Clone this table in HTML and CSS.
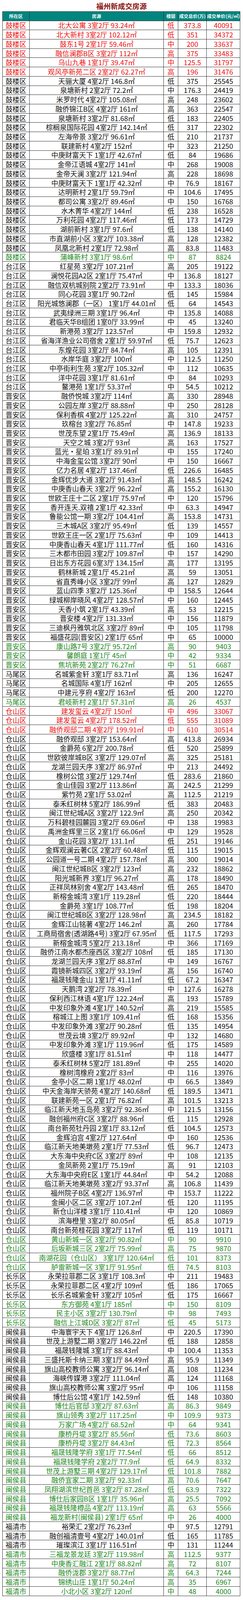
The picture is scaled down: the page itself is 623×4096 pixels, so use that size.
FILE: index.html
```html
<!DOCTYPE html>
<html lang="zh-CN">
<head>
<meta charset="utf-8">
<title>福州新成交房源</title>
<link rel="stylesheet" href="styles.css">
</head>
<body>
<h1 class="title">福州新成交房源</h1>
<div class="table">
<div class="row head"><span>所在区</span><span>房源</span><span>楼层</span><span>成交总价(万)</span><span>成交单价(元/㎡)</span></div>
<div class="row r"><span>鼓楼区</span><span>北大公寓 3室2厅 93.24㎡</span><span>低</span><span>373.8</span><span>40091</span></div>
<div class="row r"><span>鼓楼区</span><span>北大新村 3室2厅 102.12㎡</span><span>低</span><span>351</span><span>34372</span></div>
<div class="row r"><span>鼓楼区</span><span>鼓东1号 2室1厅 59.46㎡</span><span>中</span><span>200</span><span>33637</span></div>
<div class="row r"><span>鼓楼区</span><span>融信澜郡B区 3室2厅 112㎡</span><span>高</span><span>375</span><span>33483</span></div>
<div class="row r"><span>鼓楼区</span><span>乌山九巷 1室1厅 39.47㎡</span><span>中</span><span>125.5</span><span>31797</span></div>
<div class="row r"><span>鼓楼区</span><span>观风亭新苑二区 2室2厅 62.27㎡</span><span>高</span><span>196</span><span>31476</span></div>
<div class="row"><span>鼓楼区</span><span>天骊大厦 4室2厅 146.8㎡</span><span>低</span><span>375</span><span>25545</span></div>
<div class="row"><span>鼓楼区</span><span>泉塘新村 2室2厅 72.2㎡</span><span>中</span><span>176.3</span><span>24419</span></div>
<div class="row"><span>鼓楼区</span><span>米罗时代 4室2厅 105.08㎡</span><span>高</span><span>248</span><span>23602</span></div>
<div class="row"><span>鼓楼区</span><span>融侨锦江B区 4室2厅 161㎡</span><span>高</span><span>363</span><span>22547</span></div>
<div class="row"><span>鼓楼区</span><span>泉塘新村 3室2厅 81.68㎡</span><span>低</span><span>183</span><span>22405</span></div>
<div class="row"><span>鼓楼区</span><span>棕榈泉国际花园 4室2厅 142.14㎡</span><span>低</span><span>317</span><span>22302</span></div>
<div class="row"><span>鼓楼区</span><span>左海帝景 3室2厅 96.61㎡</span><span>低</span><span>210</span><span>21737</span></div>
<div class="row"><span>鼓楼区</span><span>联建新村 4室2厅 152㎡</span><span>中</span><span>323</span><span>21250</span></div>
<div class="row"><span>鼓楼区</span><span>中庚财富天下 1室1厅 42.67㎡</span><span>低</span><span>84</span><span>19686</span></div>
<div class="row"><span>鼓楼区</span><span>金帝江语城 4室2厅 141㎡</span><span>中</span><span>268</span><span>19008</span></div>
<div class="row"><span>鼓楼区</span><span>金帝天澜 3室2厅 121.94㎡</span><span>高</span><span>228</span><span>18698</span></div>
<div class="row"><span>鼓楼区</span><span>中庚财富天下 1室1厅 42.32㎡</span><span>中</span><span>76.9</span><span>18167</span></div>
<div class="row"><span>鼓楼区</span><span>达明新村 2室1厅 59.79㎡</span><span>中</span><span>104.6</span><span>17495</span></div>
<div class="row"><span>鼓楼区</span><span>都司公寓 3室2厅 89.46㎡</span><span>中</span><span>150</span><span>16768</span></div>
<div class="row"><span>鼓楼区</span><span>水木菁华 4室2厅 144㎡</span><span>低</span><span>238</span><span>16528</span></div>
<div class="row"><span>鼓楼区</span><span>万利花园 4室2厅 117.46㎡</span><span>低</span><span>173</span><span>14729</span></div>
<div class="row"><span>鼓楼区</span><span>湖前新村 3室1厅 97.6㎡</span><span>低</span><span>138</span><span>14140</span></div>
<div class="row"><span>鼓楼区</span><span>市直湖前小区 3室2厅 103.38㎡</span><span>高</span><span>128</span><span>12382</span></div>
<div class="row"><span>鼓楼区</span><span>凤凰北新村 2室1厅 72.98㎡</span><span>高</span><span>83.8</span><span>11483</span></div>
<div class="row g"><span>鼓楼区</span><span>蒲峰新村 3室1厅 98.6㎡</span><span>中</span><span>87</span><span>8824</span></div>
<div class="row"><span>台江区</span><span>红星苑 3室2厅 107.21㎡</span><span>高</span><span>205</span><span>19122</span></div>
<div class="row"><span>台江区</span><span>澜悦花园A2区 2室1厅 75.47㎡</span><span>中</span><span>136.8</span><span>18127</span></div>
<div class="row"><span>台江区</span><span>融信双杭城别院 2室2厅 73.91㎡</span><span>中</span><span>133.3</span><span>18036</span></div>
<div class="row"><span>台江区</span><span>同心花园 3室1厅 90.72㎡</span><span>低</span><span>145</span><span>15984</span></div>
<div class="row"><span>台江区</span><span>阳光城悠澜郡（一区） 1室1厅 44.01㎡</span><span>低</span><span>64</span><span>14543</span></div>
<div class="row"><span>台江区</span><span>武夷绿洲三期 3室1厅 96.4㎡</span><span>中</span><span>135.8</span><span>14088</span></div>
<div class="row"><span>台江区</span><span>君临天华B组团 1室0厅 33.99㎡</span><span>中</span><span>45</span><span>13240</span></div>
<div class="row"><span>台江区</span><span>新港苑 3室2厅 123.57㎡</span><span>中</span><span>159.8</span><span>12932</span></div>
<div class="row"><span>台江区</span><span>省海洋渔业公司宿舍 2室1厅 59.97㎡</span><span>低</span><span>75.7</span><span>12623</span></div>
<div class="row"><span>台江区</span><span>东煌花园 3室2厅 84.74㎡</span><span>高</span><span>105</span><span>12391</span></div>
<div class="row"><span>台江区</span><span>水岸华庭 3室2厅 100㎡</span><span>中</span><span>112.5</span><span>11250</span></div>
<div class="row"><span>台江区</span><span>中亭街利生苑 3室2厅 105.32㎡</span><span>中</span><span>112</span><span>10635</span></div>
<div class="row"><span>台江区</span><span>洋中花园 3室1厅 81.61㎡</span><span>中</span><span>84</span><span>10293</span></div>
<div class="row"><span>台江区</span><span>鳌港苑 1室1厅 53.37㎡</span><span>中</span><span>54.5</span><span>10212</span></div>
<div class="row"><span>晋安区</span><span>融侨悦城 3室2厅 114㎡</span><span>高</span><span>330</span><span>28948</span></div>
<div class="row"><span>晋安区</span><span>公园左岸 3室2厅 88.88㎡</span><span>中</span><span>250</span><span>28128</span></div>
<div class="row"><span>晋安区</span><span>保利香槟 4室2厅 125.22㎡</span><span>高</span><span>310</span><span>24757</span></div>
<div class="row"><span>晋安区</span><span>玖榕台 3室2厅 76.85㎡</span><span>中</span><span>147.8</span><span>19233</span></div>
<div class="row"><span>晋安区</span><span>世茂东望 2室1厅 75.49㎡</span><span>高</span><span>136.9</span><span>18133</span></div>
<div class="row"><span>晋安区</span><span>天空之城 3室2厅 93㎡</span><span>高</span><span>163</span><span>17527</span></div>
<div class="row"><span>晋安区</span><span>蓝光·星珀 3室1厅 89.91㎡</span><span>中</span><span>155</span><span>17240</span></div>
<div class="row"><span>晋安区</span><span>中海金玺公馆 3室2厅 90㎡</span><span>中</span><span>150</span><span>16667</span></div>
<div class="row"><span>晋安区</span><span>亿力名居 4室2厅 137.46㎡</span><span>低</span><span>226.6</span><span>16485</span></div>
<div class="row"><span>晋安区</span><span>金辉优步大道 3室2厅 91.43㎡</span><span>高</span><span>148.5</span><span>16242</span></div>
<div class="row"><span>晋安区</span><span>中庚香山春天 3室2厅 96.22㎡</span><span>高</span><span>155.2</span><span>16130</span></div>
<div class="row"><span>晋安区</span><span>世欧王庄十二区 2室1厅 75.97㎡</span><span>中</span><span>120</span><span>15796</span></div>
<div class="row"><span>晋安区</span><span>香开连天.双禧 2室1厅 42.33㎡</span><span>中</span><span>63.3</span><span>14947</span></div>
<div class="row"><span>晋安区</span><span>鲁能公馆一期 3室2厅 104.41㎡</span><span>高</span><span>153.8</span><span>14731</span></div>
<div class="row"><span>晋安区</span><span>三木城A区 3室2厅 95.49㎡</span><span>低</span><span>139</span><span>14557</span></div>
<div class="row"><span>晋安区</span><span>世欧王庄一区 2室1厅 75.63㎡</span><span>中</span><span>109</span><span>14413</span></div>
<div class="row"><span>晋安区</span><span>中庚香山春天 4室1厅 111.77㎡</span><span>低</span><span>160</span><span>14316</span></div>
<div class="row"><span>晋安区</span><span>三木都市田园 3室2厅 109.87㎡</span><span>中</span><span>157</span><span>14290</span></div>
<div class="row"><span>晋安区</span><span>日出东方花园 6室3厅 134.15㎡</span><span>高</span><span>177</span><span>13195</span></div>
<div class="row"><span>晋安区</span><span>鹤林新城 2室1厅 45.21㎡</span><span>高</span><span>59</span><span>13051</span></div>
<div class="row"><span>晋安区</span><span>省直秀峰小区 3室2厅 99㎡</span><span>高</span><span>127</span><span>12829</span></div>
<div class="row"><span>晋安区</span><span>蓝山四季 3室2厅 125.36㎡</span><span>中</span><span>158.5</span><span>12644</span></div>
<div class="row"><span>晋安区</span><span>绿城柳岸晓风 4室2厅 128.57㎡</span><span>中</span><span>160</span><span>12445</span></div>
<div class="row"><span>晋安区</span><span>天香小筑 2室1厅 43.39㎡</span><span>高</span><span>53</span><span>12215</span></div>
<div class="row"><span>晋安区</span><span>晋安楼 4室2厅 131.33㎡</span><span>中</span><span>156</span><span>11879</span></div>
<div class="row"><span>晋安区</span><span>三迪枫丹雅筑北区 3室2厅 89㎡</span><span>中</span><span>105</span><span>11798</span></div>
<div class="row"><span>晋安区</span><span>福盛花园(晋安区) 2室1厅 65㎡</span><span>中</span><span>65</span><span>10000</span></div>
<div class="row g"><span>晋安区</span><span>康山路7号 3室2厅 95.72㎡</span><span>高</span><span>90</span><span>9403</span></div>
<div class="row g"><span>晋安区</span><span>馨朗庭 1室1厅 45㎡</span><span>中</span><span>42</span><span>9334</span></div>
<div class="row g"><span>晋安区</span><span>焦坑新苑 2室2厅 76.27㎡</span><span>中</span><span>51</span><span>6687</span></div>
<div class="row"><span>马尾区</span><span>名城紫金轩 3室1厅 83.71㎡</span><span>高</span><span>136</span><span>16247</span></div>
<div class="row"><span>马尾区</span><span>名城国际 4室1厅 162㎡</span><span>中</span><span>205</span><span>12655</span></div>
<div class="row"><span>马尾区</span><span>中建元亨府 4室2厅 163㎡</span><span>低</span><span>200</span><span>12270</span></div>
<div class="row g"><span>马尾区</span><span>君岐新村 2室1厅 57.31㎡</span><span>高</span><span>26</span><span>4537</span></div>
<div class="row r"><span>仓山区</span><span>建发玺云 4室2厅 150㎡</span><span>中</span><span>496</span><span>33067</span></div>
<div class="row r"><span>仓山区</span><span>建发玺云 4室2厅 178.52㎡</span><span>低</span><span>555</span><span>31089</span></div>
<div class="row r"><span>仓山区</span><span>融侨观邸二期 4室2厅 199.91㎡</span><span>中</span><span>610</span><span>30514</span></div>
<div class="row"><span>仓山区</span><span>融侨观邸 3室2厅 153.64㎡</span><span>高</span><span>413.8</span><span>26934</span></div>
<div class="row"><span>仓山区</span><span>金爵苑 6室2厅 200.78㎡</span><span>低</span><span>520</span><span>25899</span></div>
<div class="row"><span>仓山区</span><span>世欧彼岸城B区 3室2厅 129.07㎡</span><span>高</span><span>325</span><span>25181</span></div>
<div class="row"><span>仓山区</span><span>龙湖兰园天序 3室2厅 86.97㎡</span><span>中</span><span>213</span><span>24492</span></div>
<div class="row"><span>仓山区</span><span>橡树公馆 3室2厅 129.74㎡</span><span>低</span><span>283.6</span><span>21860</span></div>
<div class="row"><span>仓山区</span><span>金山佳园 3室2厅 113.86㎡</span><span>高</span><span>242.5</span><span>21299</span></div>
<div class="row"><span>仓山区</span><span>紫竹苑 2室1厅 53.02㎡</span><span>高</span><span>112.5</span><span>21219</span></div>
<div class="row"><span>仓山区</span><span>泰禾红树林 5室2厅 186.99㎡</span><span>低</span><span>383</span><span>20483</span></div>
<div class="row"><span>仓山区</span><span>闽江世纪城A区 3室2厅 122.9㎡</span><span>高</span><span>250</span><span>20342</span></div>
<div class="row"><span>仓山区</span><span>万科碧桂园麓园 3室2厅 69.06㎡</span><span>中</span><span>138</span><span>19983</span></div>
<div class="row"><span>仓山区</span><span>禹洲金辉里三区 2室1厅 66.06㎡</span><span>中</span><span>129</span><span>19528</span></div>
<div class="row"><span>仓山区</span><span>金山花园 3室2厅 131.1㎡</span><span>低</span><span>251</span><span>19146</span></div>
<div class="row"><span>仓山区</span><span>金辉观澜云著C区 2室2厅 60.48㎡</span><span>低</span><span>115</span><span>19015</span></div>
<div class="row"><span>仓山区</span><span>公园道一号二期 4室2厅 157.78㎡</span><span>高</span><span>300</span><span>19014</span></div>
<div class="row"><span>仓山区</span><span>闽江世纪城B区 3室2厅 123㎡</span><span>高</span><span>232</span><span>18862</span></div>
<div class="row"><span>仓山区</span><span>阳光城新界 3室1厅 96.27㎡</span><span>高</span><span>178</span><span>18490</span></div>
<div class="row"><span>仓山区</span><span>正祥凤林别舍 4室2厅 143.48㎡</span><span>低</span><span>265</span><span>18470</span></div>
<div class="row"><span>仓山区</span><span>新榕金城湾 3室1厅 119.28㎡</span><span>低</span><span>220</span><span>18444</span></div>
<div class="row"><span>仓山区</span><span>金爵苑 3室1厅 108.77㎡</span><span>低</span><span>198</span><span>18204</span></div>
<div class="row"><span>仓山区</span><span>闽江世纪城B区 3室2厅 128.98㎡</span><span>高</span><span>234.5</span><span>18182</span></div>
<div class="row"><span>仓山区</span><span>金辉江山铭著 4室2厅 146.2㎡</span><span>高</span><span>260</span><span>17784</span></div>
<div class="row"><span>仓山区</span><span>工商局宿舍(透湖路4号) 3室2厅 67.95㎡</span><span>低</span><span>117.5</span><span>17293</span></div>
<div class="row"><span>仓山区</span><span>新榕金城湾 5室2厅 213.18㎡</span><span>中</span><span>366</span><span>17169</span></div>
<div class="row"><span>仓山区</span><span>融侨江南水都杰座西区 3室2厅 108㎡</span><span>低</span><span>185</span><span>17130</span></div>
<div class="row"><span>仓山区</span><span>龙湖兰园天序 3室2厅 88.87㎡</span><span>中</span><span>149</span><span>16767</span></div>
<div class="row"><span>仓山区</span><span>霞镜新城四区 3室2厅 93.19㎡</span><span>高</span><span>156</span><span>16740</span></div>
<div class="row"><span>仓山区</span><span>福晟钱隆金山 1室1厅 41.11㎡</span><span>低</span><span>67.2</span><span>16347</span></div>
<div class="row"><span>仓山区</span><span>天鹅湾 2室2厅 78.39㎡</span><span>中</span><span>127.6</span><span>16278</span></div>
<div class="row"><span>仓山区</span><span>保利西江林语 4室1厅 122.24㎡</span><span>高</span><span>193</span><span>15789</span></div>
<div class="row"><span>仓山区</span><span>中发印象外滩 4室1厅 140.52㎡</span><span>高</span><span>219</span><span>15585</span></div>
<div class="row"><span>仓山区</span><span>榕城江上图 3室1厅 109.41㎡</span><span>低</span><span>168</span><span>15356</span></div>
<div class="row"><span>仓山区</span><span>中发印象外滩 3室2厅 90.28㎡</span><span>低</span><span>135</span><span>14954</span></div>
<div class="row"><span>仓山区</span><span>世茂云境 3室2厅 89.92㎡</span><span>中</span><span>132</span><span>14680</span></div>
<div class="row"><span>仓山区</span><span>中发印象外滩 3室1厅 119.96㎡</span><span>低</span><span>175</span><span>14589</span></div>
<div class="row"><span>仓山区</span><span>欣盛楼 3室1厅 81.51㎡</span><span>中</span><span>118</span><span>14477</span></div>
<div class="row"><span>仓山区</span><span>泰禾红树林 5室2厅 181.89㎡</span><span>中</span><span>255</span><span>14020</span></div>
<div class="row"><span>仓山区</span><span>橡树湾橡府 2室2厅 83㎡</span><span>中</span><span>116</span><span>13976</span></div>
<div class="row"><span>仓山区</span><span>金亭小区二期 1室1厅 48.02㎡</span><span>中</span><span>66.5</span><span>13849</span></div>
<div class="row"><span>仓山区</span><span>中天金海岸天骄苑 4室2厅 140.68㎡</span><span>低</span><span>189.5</span><span>13471</span></div>
<div class="row"><span>仓山区</span><span>联建新苑一区 2室1厅 76.82㎡</span><span>高</span><span>101.5</span><span>13213</span></div>
<div class="row"><span>仓山区</span><span>临江新天地玉岛苑 3室2厅 92.36㎡</span><span>中</span><span>121.5</span><span>13156</span></div>
<div class="row"><span>仓山区</span><span>融创福州府C区 3室2厅 88.96㎡</span><span>低</span><span>115</span><span>12928</span></div>
<div class="row"><span>仓山区</span><span>南台新苑牡丹园 2室1厅 83.12㎡</span><span>低</span><span>104.5</span><span>12573</span></div>
<div class="row"><span>仓山区</span><span>金辉泊宫 4室2厅 127.64㎡</span><span>中</span><span>160</span><span>12536</span></div>
<div class="row"><span>仓山区</span><span>临江新天地美墩苑 2室1厅 77.53㎡</span><span>低</span><span>96.7</span><span>12473</span></div>
<div class="row"><span>仓山区</span><span>大东海中央府C区 3室2厅 89㎡</span><span>中</span><span>108</span><span>12135</span></div>
<div class="row"><span>仓山区</span><span>金凤新苑 2室1厅 75.19㎡</span><span>高</span><span>91</span><span>12103</span></div>
<div class="row"><span>仓山区</span><span>大东海中央府E区 1室1厅 44.84㎡</span><span>中</span><span>54.2</span><span>12088</span></div>
<div class="row"><span>仓山区</span><span>临江新天地美墩苑 3室2厅 93.37㎡</span><span>高</span><span>106.8</span><span>11439</span></div>
<div class="row"><span>仓山区</span><span>福州院子B区 4室2厅 136.97㎡</span><span>中</span><span>153.7</span><span>11222</span></div>
<div class="row"><span>仓山区</span><span>金闽小区二区 3室2厅 107.2㎡</span><span>低</span><span>120</span><span>11195</span></div>
<div class="row"><span>仓山区</span><span>新仓山洋楼 3室1厅 110.41㎡</span><span>中</span><span>120</span><span>10869</span></div>
<div class="row"><span>仓山区</span><span>滨海橙里 3室2厅 80.05㎡</span><span>低</span><span>85.8</span><span>10719</span></div>
<div class="row"><span>仓山区</span><span>南台新苑桂花园 3室2厅 117㎡</span><span>低</span><span>119</span><span>10171</span></div>
<div class="row g"><span>仓山区</span><span>黄山新城一区 3室2厅 90.82㎡</span><span>中</span><span>90</span><span>9910</span></div>
<div class="row g"><span>仓山区</span><span>后坂新城三区 2室2厅 75.99㎡</span><span>高</span><span>75</span><span>9870</span></div>
<div class="row g"><span>仓山区</span><span>南湖花园（仓山区） 3室1厅 120.64㎡</span><span>低</span><span>101</span><span>8373</span></div>
<div class="row g"><span>仓山区</span><span>胪雷新城一区 3室1厅 91.95㎡</span><span>低</span><span>74.5</span><span>8103</span></div>
<div class="row"><span>长乐区</span><span>永荣拉菲郡二区 3室1厅 108.3㎡</span><span>中</span><span>211</span><span>19483</span></div>
<div class="row"><span>长乐区</span><span>永荣拉菲郡二区 4室2厅 109㎡</span><span>低</span><span>186</span><span>17065</span></div>
<div class="row"><span>长乐区</span><span>长乐名城紫金轩 3室2厅 105㎡</span><span>低</span><span>175</span><span>16667</span></div>
<div class="row g"><span>长乐区</span><span>东方御苑 4室1厅 185㎡</span><span>中</span><span>150</span><span>8109</span></div>
<div class="row g"><span>长乐区</span><span>民主小区 3室2厅 130.79㎡</span><span>中</span><span>98</span><span>7493</span></div>
<div class="row g"><span>长乐区</span><span>融信上江城D区 3室2厅 87㎡</span><span>低</span><span>45</span><span>5173</span></div>
<div class="row"><span>闽侯县</span><span>中海寰宇天下 4室1厅 126.8㎡</span><span>中</span><span>220.5</span><span>17390</span></div>
<div class="row"><span>闽侯县</span><span>世茂上游墅二期 3室2厅 146.22㎡</span><span>低</span><span>188</span><span>12858</span></div>
<div class="row"><span>闽侯县</span><span>福晟钱隆城 3室1厅 88.43㎡</span><span>中</span><span>100.4</span><span>11353</span></div>
<div class="row"><span>闽侯县</span><span>三盛托斯卡纳三期 3室1厅 84.49㎡</span><span>高</span><span>95.9</span><span>11349</span></div>
<div class="row"><span>闽侯县</span><span>旗山高校教师公寓 3室2厅 96.14㎡</span><span>高</span><span>108</span><span>11234</span></div>
<div class="row"><span>闽侯县</span><span>海峡传媒港 3室2厅 111.04㎡</span><span>高</span><span>124</span><span>11168</span></div>
<div class="row"><span>闽侯县</span><span>旗山高校教师公寓 3室2厅 95㎡</span><span>中</span><span>106</span><span>11158</span></div>
<div class="row"><span>闽侯县</span><span>博仕后公馆 4室1厅 142.59㎡</span><span>低</span><span>148</span><span>10380</span></div>
<div class="row g"><span>闽侯县</span><span>博仕后官邸 3室2厅 87.63㎡</span><span>高</span><span>86.3</span><span>9849</span></div>
<div class="row g"><span>闽侯县</span><span>旗山领秀 3室2厅 117.25㎡</span><span>中</span><span>109.9</span><span>9373</span></div>
<div class="row g"><span>闽侯县</span><span>万家广场 4室2厅 68.52㎡</span><span>中</span><span>64</span><span>9341</span></div>
<div class="row g"><span>闽侯县</span><span>康桥丹堤 3室2厅 85.56㎡</span><span>低</span><span>73.6</span><span>8603</span></div>
<div class="row g"><span>闽侯县</span><span>康桥丹堤 3室2厅 84.43㎡</span><span>低</span><span>72.3</span><span>8564</span></div>
<div class="row g"><span>闽侯县</span><span>福晟钱隆学府 3室1厅 77.54㎡</span><span>低</span><span>66</span><span>8512</span></div>
<div class="row g"><span>闽侯县</span><span>福晟钱隆学府 2室2厅 77.9㎡</span><span>低</span><span>64.9</span><span>8332</span></div>
<div class="row g"><span>闽侯县</span><span>世茂上游墅三期 4室2厅 129.17㎡</span><span>低</span><span>101.8</span><span>7882</span></div>
<div class="row g"><span>闽侯县</span><span>融侨宜家二期 3室2厅 92.33㎡</span><span>高</span><span>70.6</span><span>7647</span></div>
<div class="row g"><span>闽侯县</span><span>凤翔湖滨世纪首邑 3室2厅 87.28㎡</span><span>低</span><span>63.9</span><span>7322</span></div>
<div class="row g"><span>闽侯县</span><span>博仕后家园B区 1室1厅 35.96㎡</span><span>高</span><span>25.5</span><span>7092</span></div>
<div class="row g"><span>闽侯县</span><span>福晟钱隆樽品 4室2厅 113.19㎡</span><span>高</span><span>63</span><span>5566</span></div>
<div class="row g"><span>闽侯县</span><span>福龙新村(闽侯县) 2室1厅 65㎡</span><span>中</span><span>26</span><span>4000</span></div>
<div class="row"><span>福清市</span><span>裕荣汇 2室2厅 76.23㎡</span><span>中</span><span>97.5</span><span>12791</span></div>
<div class="row"><span>福清市</span><span>融创福清壹号 4室2厅 140.01㎡</span><span>低</span><span>165</span><span>11785</span></div>
<div class="row"><span>福清市</span><span>璀璨滨江 3室1厅 116.51㎡</span><span>中</span><span>131</span><span>11244</span></div>
<div class="row g"><span>福清市</span><span>三福龙景龙廷 3室2厅 119.98㎡</span><span>高</span><span>112.5</span><span>9377</span></div>
<div class="row g"><span>福清市</span><span>中庚香汇融江 2室1厅 88.82㎡</span><span>高</span><span>72</span><span>8107</span></div>
<div class="row g"><span>福清市</span><span>融侨泷郡 3室2厅 88.77㎡</span><span>高</span><span>64.3</span><span>7244</span></div>
<div class="row g"><span>福清市</span><span>锦绣山庄 1室1厅 50.24㎡</span><span>高</span><span>35</span><span>6967</span></div>
<div class="row g"><span>福清市</span><span>小北小区 3室2厅 120㎡</span><span>中</span><span>48</span><span>4000</span></div>
</div>
</body>
</html>
```
FILE: styles.css
```css
* {
  box-sizing: border-box;
  margin: 0;
  padding: 0;
}

html, body {
  background: #ffffff;
}

body {
  width: 623px;
  font-family: "Noto Sans CJK SC", "Microsoft YaHei", sans-serif;
  color: #111111;
}

.title {
  height: 28.8px;
  display: flex;
  align-items: center;
  justify-content: center;
  font-size: 18.5px;
  font-weight: 700;
  line-height: 1;
  color: #8a1212;
  padding-top: 2px;
}

.table {
  margin-left: 5.8px;
  width: 610.6px;
  border-left: 1px solid #333333;
  border-top: 1px solid #333333;
}

.row {
  display: grid;
  grid-template-columns: 69.1px 344.4px 36.9px 73.2px 86px;
  height: 23.73px;
  border-bottom: 1px solid #333333;
}

.row > span {
  display: flex;
  align-items: center;
  justify-content: center;
  border-right: 1px solid #333333;
  font-size: 17.8px;
  line-height: 20px;
  padding-bottom: 1px;
  white-space: nowrap;
}

.head {
  background: #00857f;
  color: #ffffff;
  font-weight: 700;
}

.head > span {
  font-size: 11.8px;
  line-height: 14px;
}

.r {
  color: #ee1111;
}

.g {
  color: #1b8a1b;
}
```
